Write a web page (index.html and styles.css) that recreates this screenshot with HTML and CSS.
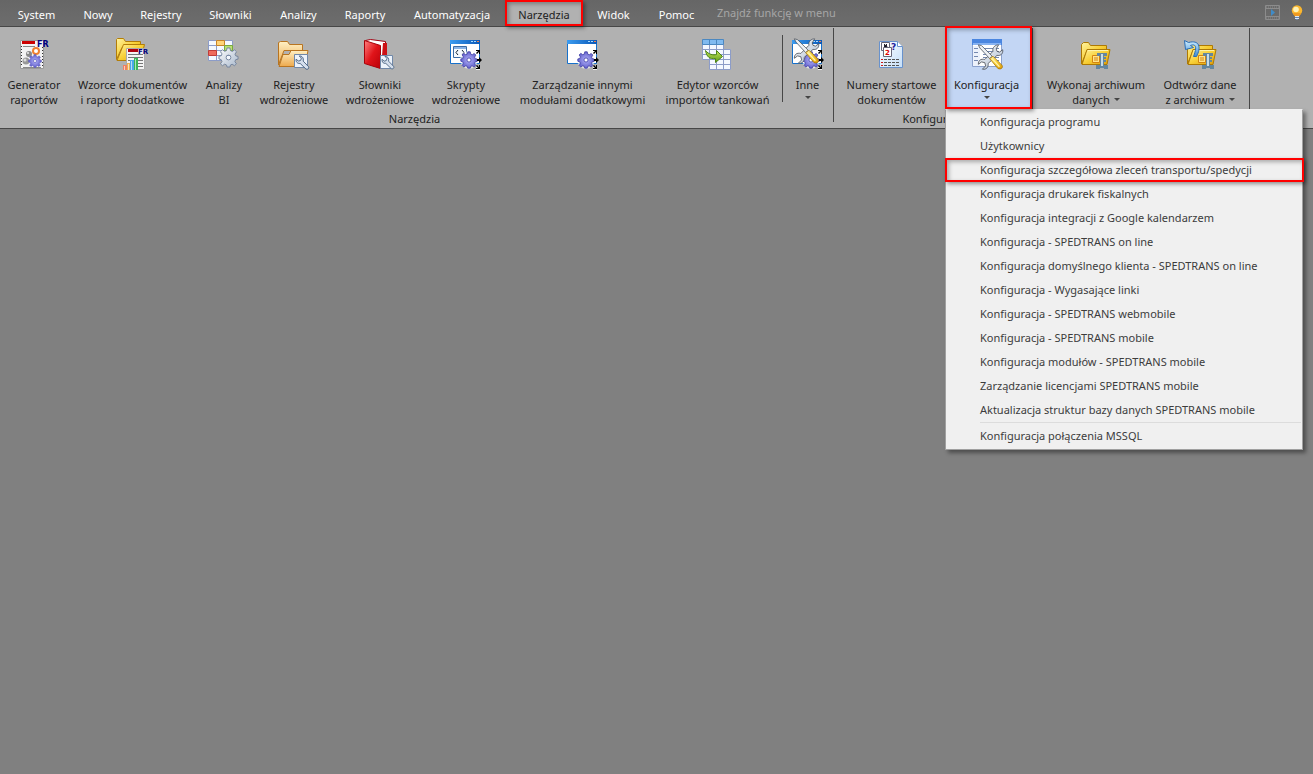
FILE: index.html
```html
<!DOCTYPE html>
<html lang="pl">
<head>
<meta charset="utf-8">
<title>SPEDTRANS</title>
<link rel="stylesheet" href="styles.css">
</head>
<body>
<svg class="sprites" aria-hidden="true">
  <defs>
    <linearGradient id="gold" x1="0" y1="0" x2="1" y2="1"><stop offset="0" stop-color="#fff3a0"/><stop offset=".5" stop-color="#f8cf35"/><stop offset="1" stop-color="#dc9a08"/></linearGradient>
    <linearGradient id="tan" x1="0" y1="0" x2="0" y2="1"><stop offset="0" stop-color="#fff0c4"/><stop offset="1" stop-color="#eda94c"/></linearGradient>
    <linearGradient id="red" x1="0" y1="0" x2="1" y2="1"><stop offset="0" stop-color="#ff8080"/><stop offset=".5" stop-color="#e0141a"/><stop offset="1" stop-color="#b80008"/></linearGradient>
    <linearGradient id="bar" x1="0" y1="0" x2="1" y2="0"><stop offset="0" stop-color="#3c9cf0"/><stop offset="1" stop-color="#0a58b8"/></linearGradient>
    <radialGradient id="violet"><stop offset="0" stop-color="#b4b4fa"/><stop offset="1" stop-color="#6462cc"/></radialGradient>
    <linearGradient id="silver" x1="0" y1="0" x2="1" y2="1"><stop offset="0" stop-color="#fff"/><stop offset="1" stop-color="#a8b8cc"/></linearGradient>
    <linearGradient id="green" x1="0" y1="0" x2="0" y2="1"><stop offset="0" stop-color="#c4e458"/><stop offset="1" stop-color="#5a9a18"/></linearGradient>
    <linearGradient id="sheet" x1="0" y1="0" x2="1" y2="1"><stop offset="0" stop-color="#fff"/><stop offset="1" stop-color="#c4def8"/></linearGradient>
    <linearGradient id="sky" x1="0" y1="0" x2="0" y2="1"><stop offset="0" stop-color="#d2f0ff"/><stop offset="1" stop-color="#3a8ad8"/></linearGradient>
    <symbol id="gear" viewBox="-1 -1 22 22">
      <path fill-rule="evenodd" d="M8.500 0h3l.6 2.800 1.900.8 2.400-1.600 2 2-1.600 2.500.8 1.800 2.400.6v2.800l-2.500.6-.8 2 1.600 2.300-2 2-2.500-1.500-1.700.7-.6 2.200H8.500l-.6-2.200-1.900-.8-2.400 1.600-2-2 1.600-2.400-.8-1.900L0 11.500v-2.800l2.500-.6.700-1.900L1.600 3.900l2-2L6 3.500l1.900-.7zM10 7.500a2.500 2.500 0 1 0 0 5 2.500 2.500 0 0 0 0-5z"/>
    </symbol>
    <symbol id="wrench" viewBox="0 0 16 16">
      <path fill="#d5dfed" stroke="#47607f" stroke-width="1" d="M4.500 1L6.800 3.300 6 5.800 3.500 6.500 1.300 4.300C.5 7 2.500 9.500 5.500 9l6.200 6c1.500 1.200 3.900-.9 2.700-2.600L8.700 6.500C9.500 3.200 7.500.7 4.500 1z"/>
    </symbol>
    <symbol id="window" viewBox="0 0 32 32">
      <path fill="#fff" stroke="#1670ca" d="M1.500 2.500h29v23h-29z"/>
      <path fill="url(#bar)" d="M1 2h30v4H1z"/>
      <path fill="#a8dcff" d="M22 3h2v1h-2zm3 0h2v1h-2z"/><path fill="#f08050" d="M28 3h2v1h-2z"/>
    </symbol>
    <symbol id="module-gear" viewBox="0 0 33 32">
      <circle cx="20" cy="22" r="9" fill="#fff" opacity=".6"/>
      <use href="#gear" x="11" y="13" width="18" height="18" fill="url(#violet)" stroke="#4442a8"/>
      <path fill="#fff" d="M27 12h4v4h-4zM27 28h4v4h-4z" opacity=".8"/>
      <path fill="#000" d="M27 12h4v4h-1v-2l-2 2-1-1 2-2h-2zM28 21h2v-2l3 3-3 3v-2h-2zM28 27l2 2v-2h1v4h-4v-1h2l-2-2z"/>
    </symbol>
    <symbol id="folder-gold" viewBox="0 0 32 32">
      <path fill="url(#gold)" stroke="#b37d08" d="M2.500 24.500v-20l1-1h6l2 3h15v6H8z"/>
      <path fill="url(#gold)" stroke="#b37d08" d="M3 25.500L9.500 9.500h21l-4 16z"/>
    </symbol>
    <symbol id="archive" viewBox="0 0 32 32">
      <path fill="url(#gold)" stroke="#ad7904" d="M2.500 26V6.500l2-2h5l2 3h16v5H8z"/>
      <path fill="url(#gold)" stroke="#ad7904" d="M3 26.500l5-15h23l-3 15z"/>
      <path stroke="#fff4a8" d="M9 12.500h20"/>
      <path fill="#ffe48a" stroke="#d48410" d="M13.500 17.500h7v7h-7z"/><path stroke="#d48410" d="M15 20h4m-4 2h4"/>
      <path fill="#64869f" d="M18 15h10v3h-3v1h2v2h-2v1h2v2h-2v3h4v4h-4v-1h-4v1h-4v-4h4v-9h-3z"/><path fill="#c6dce8" d="M22 16h2v12h-2z"/>
    </symbol>
    <symbol id="tools" viewBox="0 0 32 32">
      <path fill="url(#silver)" stroke="#4a4f58" d="M26 1l-3 5 1 3 3 1 4-3c1 5-3 8-7 7L13 24c1 4-2 8-7 7l4-4-1-4-4-1-4 3c0-5 3-7 8-6L19 9c-1-5 3-8 7-8z"/>
      <path fill="#eef1f5" stroke="#505860" d="M1 1l4 1 13 13-3 3L3 5z"/>
      <path fill="url(#gold)" stroke="#a97708" d="M15 18l4-3 11 11c2 3-1 6-5 4z"/><path stroke="#fff4b0" stroke-width="1.500" d="M18 18l9 10"/>
    </symbol>
  </defs>
</svg>

<header class="titlebar">
  <nav class="tabs" aria-label="Menu główne">
    <button class="tab">System</button>
    <button class="tab">Nowy</button>
    <button class="tab">Rejestry</button>
    <button class="tab">Słowniki</button>
    <button class="tab">Analizy</button>
    <button class="tab">Raporty</button>
    <button class="tab">Automatyzacja</button>
    <button class="tab tab-active marked">Narzędzia</button>
    <button class="tab">Widok</button>
    <button class="tab">Pomoc</button>
  </nav>
  <input class="search" type="text" placeholder="Znajdź funkcję w menu" aria-label="Znajdź funkcję w menu">
  <div class="title-actions">
    <button class="title-action" aria-label="Film">
      <svg width="16" height="16" viewBox="0 0 16 16"><path fill="none" stroke="#8c8c8c" d="M.5.500h14v14H.500zM1 3.500h13M1 11.500h13"/><path stroke="#8c8c8c" stroke-dasharray="1 1" d="M1 2h13M1 13h13"/><path fill="#3f8cc8" d="M6 4v7l4-3.500z"/></svg>
    </button>
    <button class="title-action" aria-label="Podpowiedź">
      <svg width="16" height="16" viewBox="0 0 16 16"><circle cx="8" cy="5.500" r="5.200" fill="#fbb72e"/><path fill="#f09a20" d="M4 8h8l-2 4H6z"/><circle cx="7" cy="4.500" r="2.800" fill="#fff3b8"/><path fill="#dce8f4" d="M6 11h4v3H6z"/><path fill="#6484b0" d="M6 12h4v1H6zM7 14h2v1H7z"/></svg>
    </button>
  </div>
</header>

<section class="ribbon" aria-label="Narzędzia">
  <div class="group">
    <div class="commands commands-tools">
      <button class="command">
        <svg class="icon" viewBox="0 0 32 32"><path fill="#f2f2f2" stroke="#999" d="M3.500 2.500h23v28h-23z"/><path fill="#c00" d="M5 3h13v3H5z"/><path stroke="#333" stroke-dasharray="1 2" d="M4.500 8v20M25.500 9v20"/><path stroke="#888" d="M6 8.500h12M6 29.500h18"/><circle cx="19" cy="13" r="3" fill="#fff" stroke="#f08030" stroke-width="2"/><circle cx="12" cy="16" r="3" fill="#888"/><circle cx="9" cy="23" r="3.500" fill="#999"/><circle cx="11" cy="15" r="1" fill="#eee"/><circle cx="8" cy="22" r="1.500" fill="#ddd"/><use href="#gear" x="11" y="16" width="14" height="14" fill="url(#violet)" stroke="#5a58c0"/><text class="icon-text" x="20" y="9" fill="#000080" font-size="8">FR</text></svg>
        <span>Generator<br>raportów</span>
      </button>
      <button class="command">
        <svg class="icon" viewBox="0 0 32 32"><use href="#folder-gold" x="-2" y="-3" width="32" height="32"/><path fill="#f4f4f4" stroke="#aaa" d="M10.500 10.500h18v21h-18z"/><path fill="#b00010" d="M12 11h10v3H12z"/><path stroke="#777" d="M12 16.500h15m-15 3h15m-15 3h15m-6 3h6m-6 3h6"/><text class="icon-text" x="22" y="16" fill="#000080" font-size="7">FR</text><path fill="#f08060" d="M7 27h4v5H7z"/><path fill="#f0b050" d="M11 25h4v7h-4z"/><path fill="#4aa8e8" d="M14 22h4v10h-4z"/><path fill="#38b858" d="M18 20h4v12h-4z"/><path stroke="#fff" opacity=".6" d="M8.500 28v4M12.500 26v6M15.500 23v9M19.500 21v11"/></svg>
        <span>Wzorce dokumentów<br>i raporty dodatkowe</span>
      </button>
      <button class="command">
        <svg class="icon" viewBox="0 0 32 32"><path fill="#f4f8ff" stroke="#8c9cc8" d="M1.500 2.500h24v20h-24zM9.500 3v20M17.500 3v20M2 7.500h24M2 12.500h24M2 17.500h24"/><path fill="#ffd478" stroke="#c88428" d="M9.500 2.500h8v5h-8z"/><path fill="#ef6a5c" stroke="#c03c38" d="M1.500 12.500h8v5h-8z"/><path fill="#b8e070" stroke="#78a840" d="M17.500 7.500h8v5h-8z"/><use href="#gear" x="11" y="9" width="21" height="21" fill="url(#silver)" stroke="#74849c"/></svg>
        <span>Analizy<br>BI</span>
      </button>
      <button class="command">
        <svg class="icon" viewBox="0 0 32 32"><path fill="url(#tan)" stroke="#b87420" d="M1.500 27V4.500l2-1h7l2 3h13v6H7z"/><path fill="url(#tan)" stroke="#b87420" d="M2 28.500l4-12h6l2-4h17l-3 16z"/><path fill="#edf3fb" stroke="#7088a8" d="M17.500 16.500h13v13h-13z"/><use href="#wrench" x="18" y="17" width="15" height="15"/></svg>
        <span>Rejestry<br>wdrożeniowe</span>
      </button>
      <button class="command">
        <svg class="icon" viewBox="0 0 32 32"><path fill="#fff" stroke="#a00010" d="M2.500 2.500l5-1 15 2v24l-5 2z"/><path fill="#cc1014" d="M20 5h4v23l-6 3z"/><path fill="url(#red)" stroke="#a80008" d="M1.500 2.500l16 5v23l-16-5z"/><path fill="#edf3fb" stroke="#7088a8" d="M17.500 17.500h12v13h-12z"/><use href="#wrench" x="18" y="17" width="14" height="15"/></svg>
        <span>Słowniki<br>wdrożeniowe</span>
      </button>
      <button class="command">
        <svg class="icon" viewBox="0 0 32 32"><use href="#window" width="32" height="32"/><path fill="#f6fbff" stroke="#3c6ca4" d="M4.500 8.500h13v11h-13z"/><path fill="#8ab4e6" d="M5 9h12v2H5z"/><path fill="none" stroke="#123" d="M9 12l-2 2.500 2 2.500m4-5l2 2.500-2 2.500"/><use href="#module-gear" width="33" height="32"/></svg>
        <span>Skrypty<br>wdrożeniowe</span>
      </button>
      <button class="command">
        <svg class="icon" viewBox="0 0 32 32"><use href="#window" width="32" height="32"/><use href="#module-gear" width="33" height="32"/></svg>
        <span>Zarządzanie innymi<br>modułami dodatkowymi</span>
      </button>
      <button class="command">
        <svg class="icon" viewBox="0 0 32 32"><path fill="#f4f8ff" stroke="#8c9cc8" d="M1.500 1.500h21v20h-21zM8.500 6v16M15.500 6v16M2 11.500h21M2 16.500h21"/><path fill="#80baf0" stroke="#4c88c0" d="M1.500 1.500h21v5h-21zM8.500 2v4M15.500 2v4"/><path fill="#f4f8ff" stroke="#8c9cc8" d="M8.500 11.500h21v20h-21zM15.500 12v20M22.500 12v20M9 16.500h21M9 21.500h21M9 26.500h21"/><path fill="url(#green)" stroke="#4c8414" d="M4.500 12.500c3 4 8 5 11 4v-4l6 6-7 6v-4c-6 1-9-2-10-8z"/></svg>
        <span>Edytor wzorców<br>importów tankowań</span>
      </button>
      <span class="divider divider-inner"></span>
      <button class="command">
        <svg class="icon" viewBox="0 0 32 32"><use href="#window" width="32" height="32"/><use href="#module-gear" width="33" height="32"/><use href="#tools" x="2" y="0" width="27" height="26"/></svg>
        <span>Inne</span><span class="caret-row"><i class="caret"></i></span>
      </button>
    </div>
    <h2 class="group-label">Narzędzia</h2>
  </div>
  <span class="divider"></span>

  <div class="group group-config">
    <div class="commands commands-config">
      <button class="command">
        <svg class="icon" viewBox="0 0 32 32"><path fill="url(#sheet)" stroke="#6892cc" d="M4.500 3.500h18l5 5v21h-23z"/><path fill="#fff" stroke="#6892cc" d="M22.500 3.500v5h5"/><path fill="#fff" stroke="#667" d="M6.500 4.500h8v8h-8z"/><path stroke="#223" d="M9.500 6v3h3M11.500 6v5"/><path fill="#fff" stroke="#667" d="M8.500 9.500h8v9h-8z"/><text class="icon-text" x="10" y="17" fill="#d00" font-size="7">2</text><text class="icon-text" x="16" y="12" fill="#22229c" font-size="9">?</text><path stroke="#d01818" d="M6 21.500h2m-2 3h2m-2 3h2"/><path stroke="#555" stroke-dasharray="3 1" d="M9 21.500h16M9 24.500h16M9 27.500h16"/></svg>
        <span>Numery startowe<br>dokumentów</span>
      </button>
      <div class="menu-anchor">
        <button class="command command-open marked" aria-haspopup="menu" aria-expanded="true">
          <svg class="icon" viewBox="0 0 32 32"><path fill="#fff" stroke="#8ba1cc" d="M1.500 1.500h29v27h-29z"/><path fill="#4a86e0" d="M1 1h30v6H1z"/><path fill="#86b2f2" d="M2 5h28v2H2z"/><path fill="#edf2fb" d="M2 8h7v20H2z"/><path stroke="#7488b0" d="M3 10.500h4m-4 4h4m-4 4h4m-4 4h4M12 10.500h16m-16 3h16m-16 3h16m-16 3h16m-16 3h16"/><use href="#tools" x="6" y="6" width="27" height="26"/></svg>
          <span>Konfiguracja</span><span class="caret-row"><i class="caret"></i></span>
        </button>
        <div class="menu" role="menu">
          <button class="menu-item" role="menuitem">Konfiguracja programu</button>
          <button class="menu-item" role="menuitem">Użytkownicy</button>
          <button class="menu-item marked" role="menuitem">Konfiguracja szczegółowa zleceń transportu/spedycji</button>
          <button class="menu-item" role="menuitem">Konfiguracja drukarek fiskalnych</button>
          <button class="menu-item" role="menuitem">Konfiguracja integracji z Google kalendarzem</button>
          <button class="menu-item" role="menuitem">Konfiguracja - SPEDTRANS on line</button>
          <button class="menu-item" role="menuitem">Konfiguracja domyślnego klienta - SPEDTRANS on line</button>
          <button class="menu-item" role="menuitem">Konfiguracja - Wygasające linki</button>
          <button class="menu-item" role="menuitem">Konfiguracja - SPEDTRANS webmobile</button>
          <button class="menu-item" role="menuitem">Konfiguracja - SPEDTRANS mobile</button>
          <button class="menu-item" role="menuitem">Konfiguracja modułów - SPEDTRANS mobile</button>
          <button class="menu-item" role="menuitem">Zarządzanie licencjami SPEDTRANS mobile</button>
          <button class="menu-item" role="menuitem">Aktualizacja struktur bazy danych SPEDTRANS mobile</button>
          <hr class="menu-separator">
          <button class="menu-item" role="menuitem">Konfiguracja połączenia MSSQL</button>
        </div>
      </div>
    </div>
    <h2 class="group-label">Konfiguracja</h2>
  </div>
  <span class="divider"></span>

  <div class="group group-archive">
    <div class="commands commands-archive">
      <button class="command">
        <svg class="icon" viewBox="0 0 32 32"><use href="#archive" width="32" height="32"/></svg>
        <span>Wykonaj archiwum<br>danych <i class="caret"></i></span>
      </button>
      <button class="command">
        <svg class="icon" viewBox="0 0 32 32"><use href="#archive" x="2" width="32" height="32"/><path fill="url(#sky)" stroke="#2a6cb4" d="M1.500 2.500l1 9 8-2-3-2c5-2 7 1 3 11h3c5-9 3-17-8-14z"/></svg>
        <span>Odtwórz dane<br>z archiwum <i class="caret"></i></span>
      </button>
    </div>
  </div>
  <span class="divider"></span>
</section>
<main class="workspace"></main>
</body>
</html>
```
FILE: styles.css
```css
* { box-sizing: border-box; }

body {
  margin: 0;
  min-height: 100vh;
  display: flex;
  flex-direction: column;
  background: #808080;
  color: #222;
  font: 11px/15px "Noto Sans", "Open Sans", sans-serif;
}

button, input { font: inherit; color: inherit; border: 0; background: none; padding: 0; margin: 0; }

.sprites { position: absolute; width: 0; height: 0; }

/* Title bar with tabs */
.titlebar {
  display: flex;
  height: 27px;
  padding-left: 4px;
  background: linear-gradient(#666, #6d6d6d);
  border-bottom: 1px solid #474747;
}
.tabs {
  display: grid;
  grid-template-columns: 65px 58px 68px 71px 65px 68px 106px 78px 61px 65px;
}
.tab { color: #fff; padding-top: 3px; }
.tab-active { background: #b1b1b1; color: #222; }

.search { flex: 1; min-width: 0; padding: 0 8px 2px; color: #fff; outline: 0; }
.search::placeholder { color: #a6a6a6; opacity: 1; }

.title-actions { display: flex; gap: 8px; padding: 5px 8px 0 0; align-items: flex-start; }
.title-action svg { display: block; }

/* Red frame around the elements to be clicked */
.marked { position: relative; }
.marked::after {
  content: "";
  position: absolute;
  inset: 0;
  border: 2px solid #f00;
  box-shadow: 2px 2px 4px rgba(0, 0, 0, .4), inset 2px 2px 4px rgba(0, 0, 0, .3);
  pointer-events: none;
}

/* Ribbon */
.ribbon {
  display: flex;
  height: 102px;
  background: #b1b1b1;
  border-bottom: 1px solid #474747;
}
.group { display: flex; flex-direction: column; padding-right: 4px; }
.group-config { padding: 0 0 0 4px; }
.group-archive { padding-left: 4px; }
.group-label { margin: 0; padding-top: 2px; font: inherit; text-align: center; }

.commands { display: grid; height: 82px; }
.commands-tools { grid-template-columns: 68px 129px 54px 86px 86px 86px 147px 123px 7px 43px; }
.commands-config { grid-template-columns: 107px 87px; }
.commands-archive { grid-template-columns: 118px 90px; }

.command {
  display: flex;
  flex-direction: column;
  align-items: center;
  padding-top: 11px;
  white-space: nowrap;
}
.icon { width: 32px; height: 32px; margin: 0 2px 7px 0; flex: none; overflow: visible; }
.icon-text { font-family: "DejaVu Sans", sans-serif; font-weight: 700; }
.command-open { width: 100%; height: 100%; padding-right: 4px; background: #c3d6f4; }
.command-open::after { top: -1px; }
.command-open .icon { margin-right: 0; }

.caret {
  display: inline-block;
  border: 3px solid transparent;
  border-top-color: #444;
  border-bottom: 0;
  margin-left: 1px;
  vertical-align: 3px;
}
.caret-row { height: 12px; line-height: 12px; }

.divider { width: 1px; margin: 1px 0 6px; background: #474747; }
.divider-inner { margin: 8px 3px 7px; }

/* Drop-down menu */
.menu-anchor { position: relative; }
.menu {
  position: absolute;
  z-index: 1;
  top: 100%;
  left: 0;
  width: 358px;
  display: flex;
  flex-direction: column;
  padding-bottom: 1px;
  background: #f0f0f0;
  border: 1px solid #a0a0a0;
  border-top-color: #f0f0f0;
  box-shadow: 3px 3px 4px rgba(0, 0, 0, .4);
  color: #3c3c3c;
}
.menu-item { height: 24px; padding: 0 0 2px 34px; text-align: left; }
.menu-item.marked::after { left: -1px; right: -2px; }
.menu-separator { width: auto; height: 2px; margin: 0 1px 0 34px; border: 0; border-top: 1px solid #dcdcdc; }
.menu-anchor .command-open { z-index: 2; }

.workspace { flex: 1; }
```
